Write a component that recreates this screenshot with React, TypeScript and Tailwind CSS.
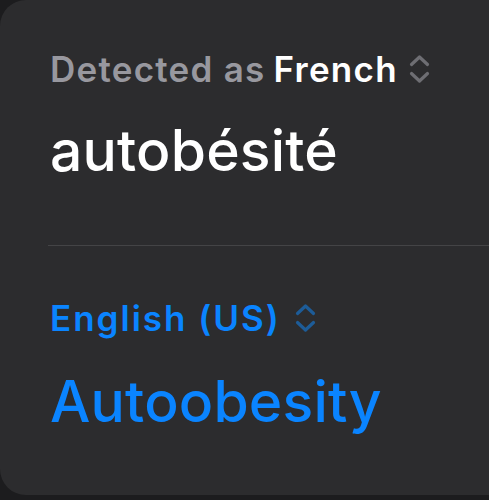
import React from "react";

function UpDown({ className }: { className?: string }) {
  return (
    <svg viewBox="0 0 23 30" className={className} fill="none" stroke="currentColor" strokeWidth={3.2} strokeLinecap="round" strokeLinejoin="round">
      <path d="M3.5 10.5 L11.5 3 L19.5 10.5" />
      <path d="M3.5 19.5 L11.5 27 L19.5 19.5" />
    </svg>
  );
}

export default function App() {
  return (
    <div className="w-[489px] h-[500px] overflow-hidden bg-[#1c1c1e] font-['Inter',sans-serif]">
      <div className="h-[495px] rounded-l-[26px] bg-[#2c2c2e]">
        <div className="pl-[50px] pt-[47px]">
          <div className="flex items-center text-[35px] font-semibold leading-[44px] tracking-[1.25px]">
            <span className="text-[#98989f]">Detected as</span>
            <span className="ml-[8px] text-white">French</span>
            <UpDown className="ml-[10px] w-[23px] h-[30px] text-[#6e6e73]" />
          </div>
          <div className="mt-[25px] text-[57px] font-medium leading-[70px] text-white tracking-[0.2px]">
            autobésité
          </div>
        </div>
        <div className="ml-[48px] mt-[59px] h-px bg-[#444446]" />
        <div className="pl-[50px] pt-[50px]">
          <div className="flex items-center text-[35px] font-semibold leading-[44px] text-[#0a84ff] tracking-[2px]">
            <span>English (US)</span>
            <UpDown className="ml-[13px] w-[23px] h-[30px] text-[#1d5c98]" />
          </div>
          <div className="mt-[27px] text-[57px] font-medium leading-[70px] text-[#0a84ff] tracking-[0.2px]">
            Autoobesity
          </div>
        </div>
      </div>
    </div>
  );
}
